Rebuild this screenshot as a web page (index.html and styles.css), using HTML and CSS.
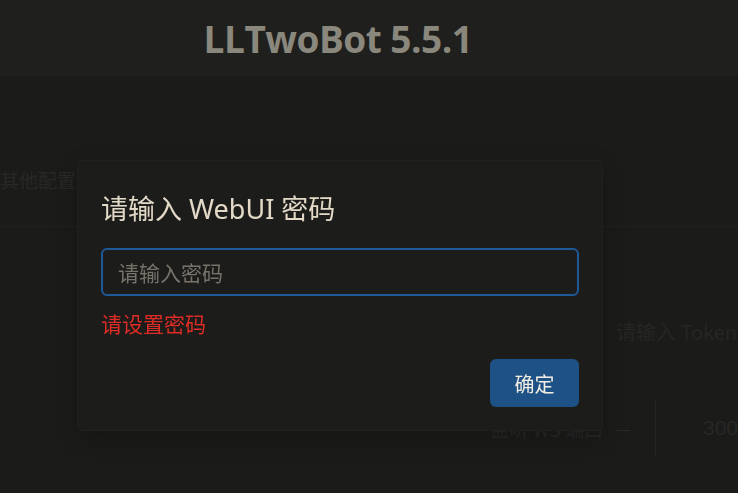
FILE: index.html
```html
<!DOCTYPE html>
<html>
<head>
<meta charset="utf-8">
<title>LLTwoBot WebUI</title>
<link rel="stylesheet" href="styles.css">
</head>
<body>
<div class="header">
  <h1 class="brand">LLTwoBot 5.5.1</h1>
</div>

<div class="page">
  <div class="section-title">其他配置</div>
  <div class="divider"></div>
  <div class="row row-token">
    <div class="label"></div>
    <div class="field">请输入 Token</div>
  </div>
  <div class="row row-port">
    <div class="label">监听 WS 端口</div>
    <div class="field number">
      <span class="minus">—</span>
      <span class="sep"></span>
      <span class="num">300</span>
    </div>
  </div>
</div>

<div class="mask">
  <div class="dialog">
    <h2 class="dialog-title">请输入 WebUI 密码</h2>
    <input class="pwd" type="password" placeholder="请输入密码">
    <p class="err">请设置密码</p>
    <div class="actions">
      <button class="btn-ok">确定</button>
    </div>
  </div>
</div>
</body>
</html>
```

FILE: styles.css
```css
* {margin:0; padding:0; box-sizing:border-box;}
body {background:#1b1b1a; font-family:"Noto Sans", "Noto Sans CJK SC", sans-serif; overflow:hidden;}

/* 顶部标题栏 */
.header {height:76px; background:#1f1f1d; display:flex; align-items:center; justify-content:center; padding-right:62px;}
.brand {font-family:"Open Sans", sans-serif; font-weight:700; font-size:37px; color:#8a877c; letter-spacing:-0.5px;}

/* 背后的页面，被遮罩压暗 */
.page {color:#282826; font-size:19px;}
.section-title {margin-top:93px; line-height:22px; font-family:"Noto Sans CJK SC", sans-serif;}
.divider {height:1px; background:#20201e; margin-top:35px;}
.row {display:flex; align-items:center;}
.row .label {width:603px; text-align:right; font-family:"Noto Sans CJK SC", sans-serif;}
.row .field {padding-left:13px; font-family:"Noto Sans CJK SC", sans-serif;}
.row-token {margin-top:90px; color:#262624; font-size:20px;}
.row-port {margin-top:54px; height:56px; color:#282826;}
.number {display:flex; align-items:center; height:56px;}
.minus {width:17px; overflow:hidden; color:#2b2b29; font-size:16px;}
.sep {width:1px; height:56px; background:#252523; margin-left:22px;}
.num {margin-left:47px; color:#272725; font-family:"Liberation Sans", sans-serif; font-size:21px;}

/* 遮罩和弹框 */
.mask {position:fixed; left:0; top:0; right:0; bottom:0; padding:160px 0 0 77px;}
.dialog {width:526px; height:271px; background:#1c1c1a; border:1px solid #20201e; border-radius:4px; padding:24px 23px 0 23px; box-shadow:0 8px 24px rgba(0,0,0,0.2);}
.dialog-title {font-weight:400; font-size:27px; line-height:48px; color:#e2d9c7; font-family:"Noto Sans", "Noto Sans CJK SC", sans-serif;}
.pwd {display:block; width:478px; height:48px; margin-top:15px; background:#1c1c1a; border:2px solid #1f5a98; border-radius:6px; padding:0 15px; font-size:21px; color:#ddd; font-family:"Noto Sans CJK SC", sans-serif; outline:none;}
.pwd::placeholder {color:#77736a;}
.err {color:#dd2c26; font-size:21px; line-height:30px; margin-top:12px; font-family:"Noto Sans CJK SC", sans-serif;}
.actions {display:flex; justify-content:flex-end; margin-top:21px;}
.btn-ok {width:89px; height:48px; border:none; border-radius:6px; background:#1e5287; color:#f2ede2; font-size:20px; font-family:"Noto Sans CJK SC", sans-serif;}
```
